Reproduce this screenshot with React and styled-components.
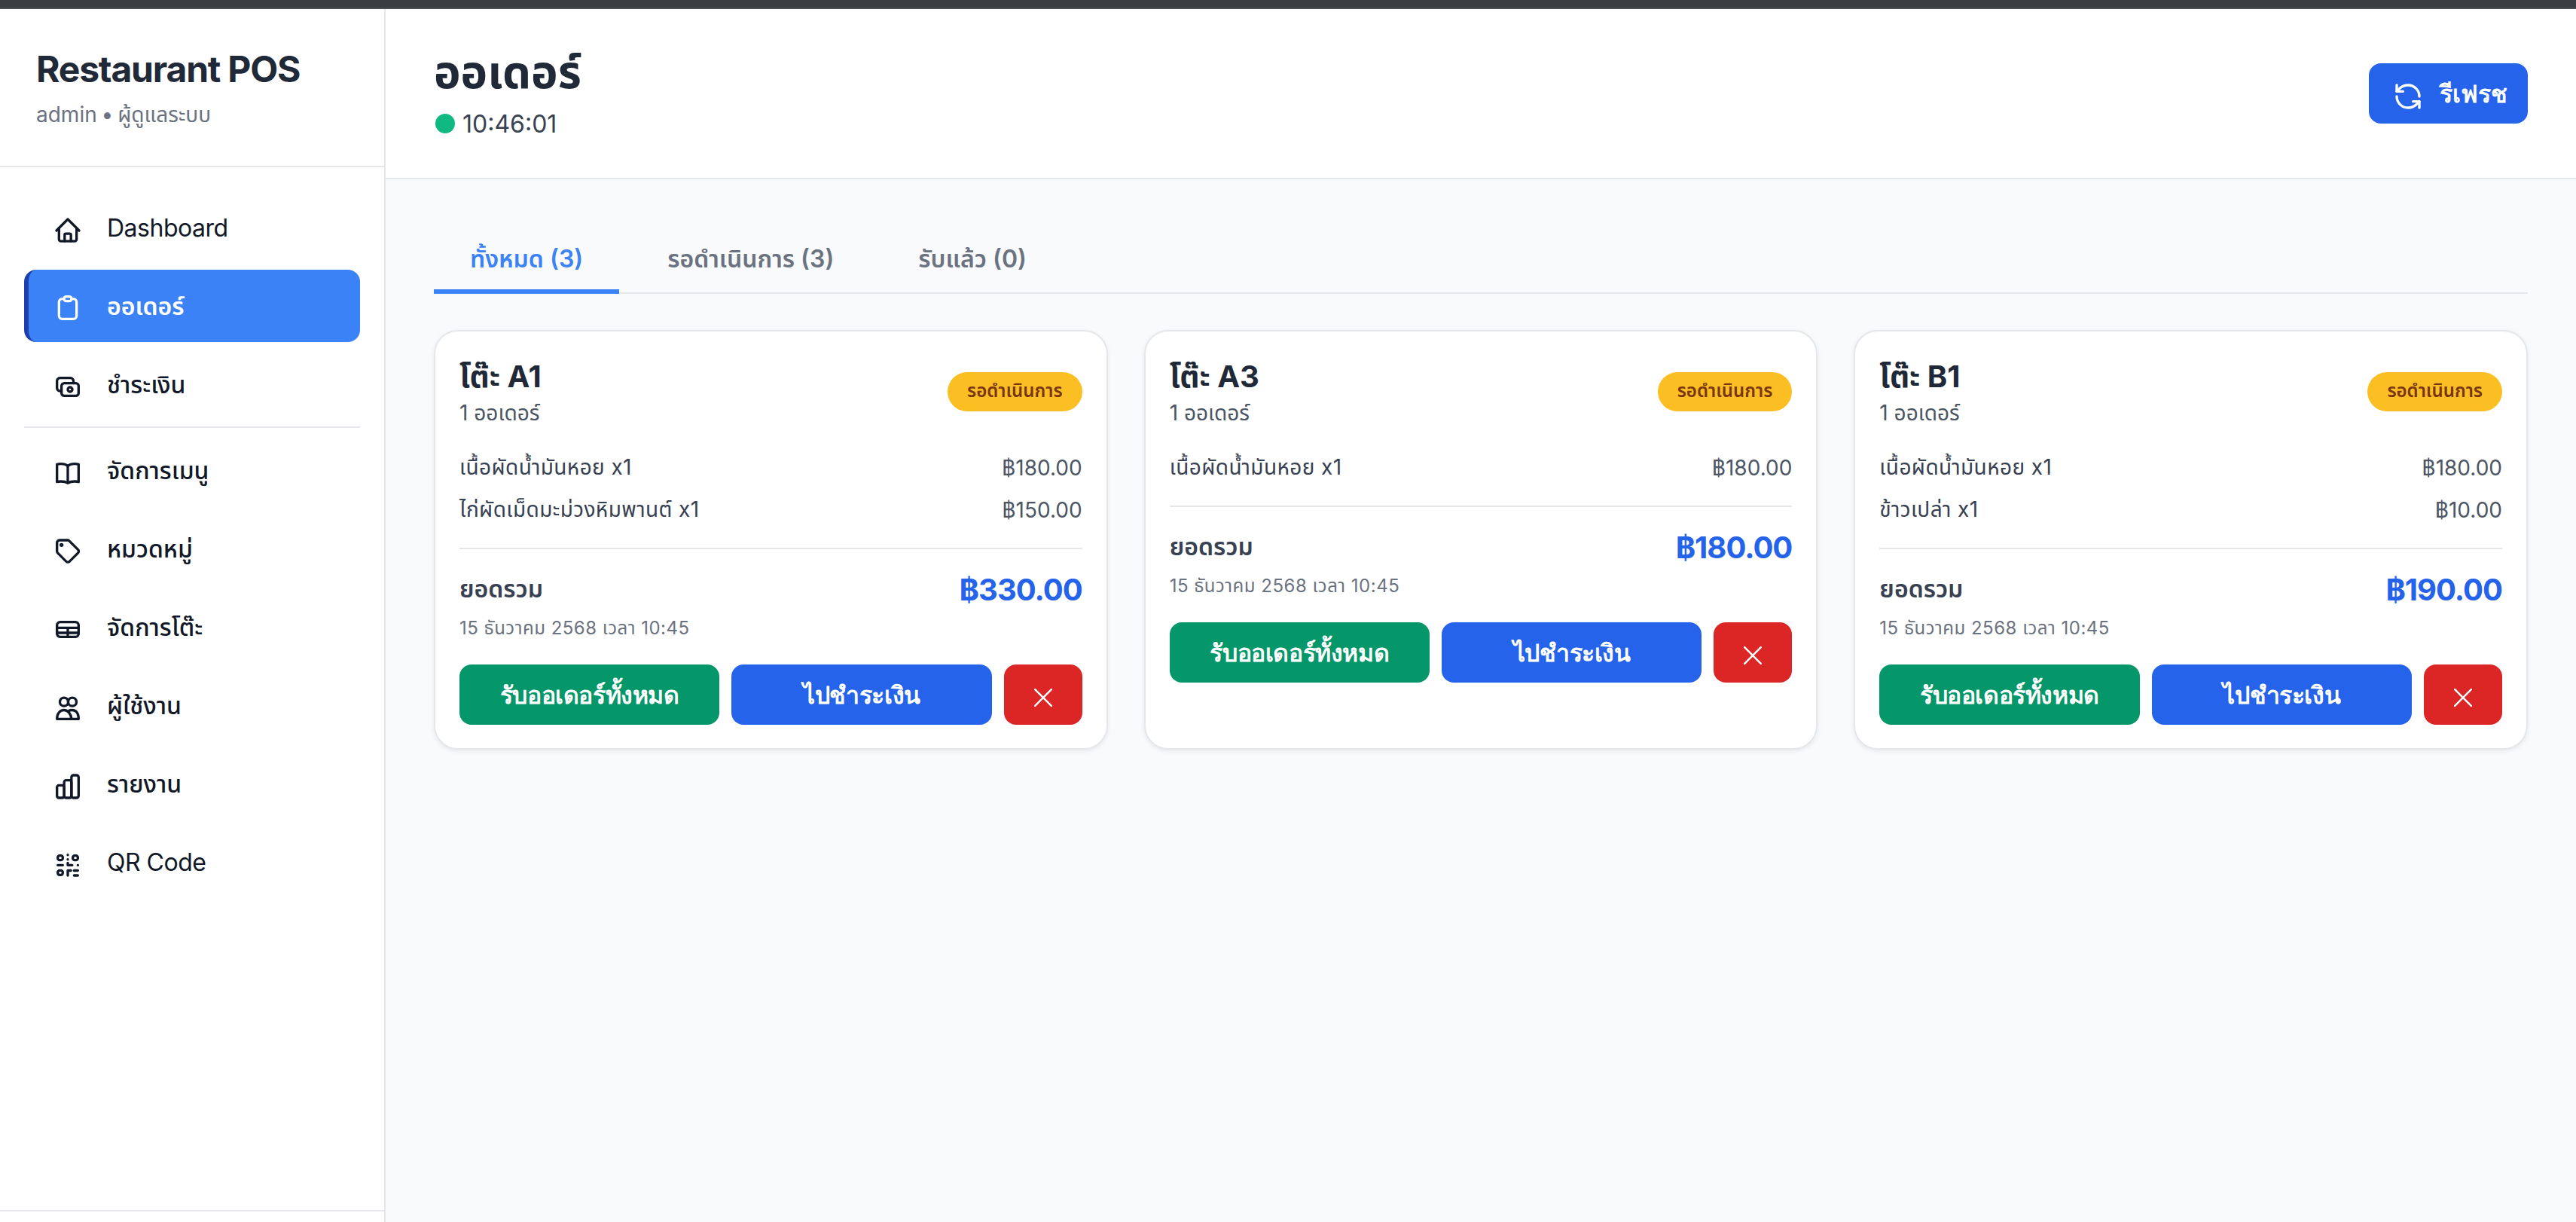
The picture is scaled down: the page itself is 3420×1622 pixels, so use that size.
import React from 'react';
import styled, { createGlobalStyle } from 'styled-components';
import { RefreshCcw } from 'lucide-react';

const GlobalStyle = createGlobalStyle`
  html, body { margin: 0; padding: 0; background: #f9fafb; }
  * { box-sizing: border-box; }
  body { font-family: Inter, "Noto Sans", "Noto Sans Thai", sans-serif; color: #111827; }
`;

const Svg = ({ children }) => (
  <svg viewBox="0 0 24 24" fill="none" stroke="currentColor" strokeWidth="2" strokeLinecap="round" strokeLinejoin="round">
    {children}
  </svg>
);

const HomeIcon = () => (
  <Svg>
    <path d="M3 12 12 3l9 9" />
    <path d="M5 10.5v8.5a1.5 1.5 0 0 0 1.5 1.5h11a1.5 1.5 0 0 0 1.5-1.5v-8.5" />
    <path d="M9.5 20.5v-5a1 1 0 0 1 1-1h3a1 1 0 0 1 1 1v5" />
  </Svg>
);
const ClipboardIcon = () => (
  <Svg>
    <path d="M9 4H7.5A2.5 2.5 0 0 0 5 6.5v11A2.5 2.5 0 0 0 7.5 20h9a2.5 2.5 0 0 0 2.5-2.5v-11A2.5 2.5 0 0 0 16.5 4H15" />
    <rect x="9" y="2.2" width="6" height="3.6" rx="1.8" />
  </Svg>
);
const CashIcon = () => (
  <Svg>
    <rect x="7" y="8.8" width="13.6" height="10" rx="2.2" />
    <path d="M16.5 8.8V7a2.4 2.4 0 0 0-2.4-2.4H5.8A2.4 2.4 0 0 0 3.4 7v5.6A2.4 2.4 0 0 0 5.8 15H7" />
    <circle cx="13.8" cy="13.8" r="1.8" />
  </Svg>
);
const BookIcon = () => (
  <Svg>
    <path d="M12 6.2C10.5 5 8.5 4.6 6.5 4.6c-1.1 0-2.1.1-3.1.4v14c1-.3 2-.4 3.1-.4 2 0 4 .4 5.5 1.2 1.5-.8 3.5-1.2 5.5-1.2 1.1 0 2.1.1 3.1.4V5c-1-.3-2-.4-3.1-.4-2 0-4 .4-5.5 1.6Z" />
    <path d="M12 6.2v13.6" />
  </Svg>
);
const TagIcon = () => (
  <Svg>
    <path d="M5.5 3h6.3a1.8 1.8 0 0 1 1.3.5l7.1 7.1a1.8 1.8 0 0 1 0 2.5L13.3 20a1.8 1.8 0 0 1-2.5 0l-6.9-6.9a1.8 1.8 0 0 1-.5-1.3V5.1A2.1 2.1 0 0 1 5.5 3Z" />
    <circle cx="7" cy="6.8" r=".6" fill="currentColor" />
  </Svg>
);
const TableIcon = () => (
  <Svg>
    <rect x="3.4" y="5.8" width="17.2" height="11.8" rx="2.5" />
    <path d="M3.4 10.4h17.2M3.4 14.4h17.2M12 10.4v7.2" />
  </Svg>
);
const UsersIcon = () => (
  <Svg>
    <circle cx="9" cy="7" r="3.3" />
    <circle cx="15.6" cy="7" r="3.3" />
    <path d="M3.4 20.6c0-4.6 2.6-7.1 5.6-7.1s5.6 3 6 7.1Z" />
    <path d="M12.5 14.2c1-.5 2-.7 3-.7 3 0 5.1 2.5 5.1 7.1H15" />
  </Svg>
);
const ChartIcon = () => (
  <Svg>
    <rect x="3.4" y="11" width="5.7" height="10" rx="1.6" />
    <rect x="9.1" y="7" width="5.8" height="14" rx="1.6" />
    <rect x="14.9" y="3" width="5.7" height="18" rx="1.6" />
  </Svg>
);
const QrIcon = () => (
  <Svg>
    <rect x="4" y="4.6" width="4" height="3.6" rx="1.5" />
    <rect x="16" y="4.6" width="4" height="3.6" rx="1.5" />
    <rect x="4" y="16.4" width="4" height="3.6" rx="1.5" />
    <path d="M4 12.2h4M12 4v.1M12 7.6v.1M12 10.5v1.7h3.5M20 12.2h.1M12 20.4v-3.9h2.5M17 16.5h3M17 20.4h3" />
  </Svg>
);
const CloseIcon = () => (
  <svg viewBox="0 0 24 24" fill="none" stroke="currentColor" strokeWidth="1.5" strokeLinecap="round">
    <path d="M5.5 5.5l13 13M18.5 5.5l-13 13" />
  </svg>
);

const navTop = [
  { label: 'Dashboard', Icon: HomeIcon, latin: true },
  { label: 'ออเดอร์', Icon: ClipboardIcon, active: true },
  { label: 'ชำระเงิน', Icon: CashIcon },
];
const navBottom = [
  { label: 'จัดการเมนู', Icon: BookIcon },
  { label: 'หมวดหมู่', Icon: TagIcon },
  { label: 'จัดการโต๊ะ', Icon: TableIcon },
  { label: 'ผู้ใช้งาน', Icon: UsersIcon },
  { label: 'รายงาน', Icon: ChartIcon },
  { label: 'QR Code', Icon: QrIcon, latin: true },
];
const orders = [
  { table: 'โต๊ะ A1', items: [['เนื้อผัดน้ำมันหอย x1', '฿180.00'], ['ไก่ผัดเม็ดมะม่วงหิมพานต์ x1', '฿150.00']], total: '฿330.00' },
  { table: 'โต๊ะ A3', items: [['เนื้อผัดน้ำมันหอย x1', '฿180.00']], total: '฿180.00' },
  { table: 'โต๊ะ B1', items: [['เนื้อผัดน้ำมันหอย x1', '฿180.00'], ['ข้าวเปล่า x1', '฿10.00']], total: '฿190.00' },
];

const Page = styled.div`height: 1622px; display: flex; flex-direction: column; overflow: hidden;`;
const TopBar = styled.div`height: 12px; flex: none; background: #383e42; border-bottom: 2px solid #4a4d4f;`;
const Body = styled.div`flex: 1; display: flex; min-height: 0;`;
const Sidebar = styled.aside`width: 512px; flex: none; background: #fff; border-right: 2px solid #e5e7eb; display: flex; flex-direction: column;`;
const Brand = styled.div`height: 210px; flex: none; padding: 48px 48px 0; border-bottom: 2px solid #e5e7eb;`;
const BrandName = styled.div`font-size: 48px; line-height: 64px; font-weight: 700; letter-spacing: -1.2px; color: #1f2937;`;
const BrandSub = styled.div`font-size: 28px; line-height: 40px; color: #6b7280; margin-top: 8px; word-spacing: -2px;`;
const Nav = styled.nav`flex: 1; padding: 32px; display: flex; flex-direction: column; gap: 8px;`;
const NavItem = styled.div`
  height: 96px; display: flex; align-items: center; gap: 32px; padding-left: 32px;
  padding-top: ${p => (p.$latin ? '0' : '4px')};
  border-left: 6px solid ${p => (p.$active ? '#1e40af' : 'transparent')};
  border-radius: 16px;
  background: ${p => (p.$active ? '#3b82f6' : 'transparent')};
  color: ${p => (p.$active ? '#fff' : '#111827')};
  font-size: 32px;
  font-weight: ${p => (p.$active ? 600 : p.$latin ? 400 : 500)};
  letter-spacing: ${p => (p.$latin ? '-0.5px' : '0')};
  svg { width: 40px; height: 40px; flex: none; margin-top: ${p => (p.$latin ? '8px' : '4px')}; }
`;
const NavDivider = styled.div`height: 2px; background: #e5e7eb;`;
const SideFoot = styled.div`height: 16px; flex: none; border-top: 2px solid #e5e7eb;`;
const Main = styled.main`flex: 1; min-width: 0; display: flex; flex-direction: column;`;
const Header = styled.header`height: 226px; flex: none; background: #fff; border-bottom: 2px solid #e5e7eb; padding: 0 64px; display: flex; align-items: center; justify-content: space-between;`;
const TitleBlock = styled.div`padding-bottom: 10px;`;
const Title = styled.h1`margin: 0; font-size: 60px; line-height: 80px; font-weight: 700; color: #1f2937;`;
const Clock = styled.div`display: flex; align-items: center; gap: 10px; font-size: 32px; color: #374151; margin-top: 10px;`;
const Dot = styled.span`width: 26px; height: 26px; margin-left: 2px; border-radius: 50%; background: #10b981;`;
const RefreshBtn = styled.button`
  height: 80px; width: 211px; padding: 0 0 0 32px; border: 0; border-radius: 16px; background: #2563eb; color: #fff;
  font: 600 32px Inter, "Noto Sans", sans-serif; display: flex; align-items: center; gap: 22px;
  svg { width: 40px; height: 40px; margin-top: 8px; }
`;
const Content = styled.div`flex: 1; padding: 48px 64px;`;
const Tabs = styled.div`display: flex; gap: 16px; border-bottom: 2px solid #e5e7eb; height: 104px;`;
const Tab = styled.div`
  padding: 20px 48px 0; height: 104px; display: flex; align-items: center; font-size: 32px; font-weight: 600;
  color: ${p => (p.$active ? '#3b82f6' : '#6b7280')};
  border-bottom: 6px solid ${p => (p.$active ? '#3b82f6' : 'transparent')};
`;
const Grid = styled.div`display: grid; grid-template-columns: repeat(3, 1fr); gap: 48px; margin-top: 48px;`;
const Card = styled.article`background: #fff; border: 2px solid #e5e7eb; border-radius: 32px; padding: 32px 32px 31px; box-shadow: 0 2px 6px rgba(0,0,0,.08);`;
const CardHead = styled.div`display: flex; justify-content: space-between; align-items: center; margin-bottom: 25px;`;
const TableName = styled.div`font-size: 40px; line-height: 56px; font-weight: 700; color: #1f2937;`;
const OrderCount = styled.div`font-size: 28px; line-height: 40px; color: #4b5563;`;
const Badge = styled.span`padding: 0 26px; height: 52px; display: flex; align-items: center; border-radius: 26px; background: #fbbf24; color: #78350f; font-size: 24px; font-weight: 600;`;
const Row = styled.div`display: flex; justify-content: space-between; align-items: center; height: 56px; font-size: 28px; color: #374151;`;
const ItemName = styled.span`letter-spacing: 0.4px;`;
const Price = styled.span`color: #4b5563;`;
const Totals = styled.div`margin-top: 22px; padding-top: 26px; border-top: 2px solid #e5e7eb; display: flex; justify-content: space-between; align-items: center;`;
const TotalLabel = styled.span`font-size: 32px; font-weight: 600; color: #374151;`;
const TotalValue = styled.span`font-size: 40px; line-height: 56px; font-weight: 700; color: #2563eb; letter-spacing: -1px;`;
const DateText = styled.div`font-size: 24px; line-height: 36px; color: #6b7280; margin-top: 5px; letter-spacing: 0.5px;`;
const Actions = styled.div`display: flex; gap: 16px; margin-top: 30px;`;
const ActionBtn = styled.button`
  flex: ${p => (p.$icon ? '0 0 104px' : 1)}; height: 80px; padding: 0; border: 0; border-radius: 16px; color: #fff;
  background: ${p => p.$bg}; font: 600 32px Inter, "Noto Sans", sans-serif; letter-spacing: -0.4px;
  display: flex; align-items: center; justify-content: center;
  svg { width: 40px; height: 40px; margin-top: 8px; }
`;

const App = () => (
  <Page>
    <GlobalStyle />
    <TopBar />
    <Body>
      <Sidebar>
        <Brand>
          <BrandName>Restaurant POS</BrandName>
          <BrandSub>admin • ผู้ดูแลระบบ</BrandSub>
        </Brand>
        <Nav>
          {navTop.map(({ label, Icon, active, latin }) => (
            <NavItem key={label} $active={active} $latin={latin}><Icon />{label}</NavItem>
          ))}
          <NavDivider />
          {navBottom.map(({ label, Icon, latin }) => (
            <NavItem key={label} $latin={latin}><Icon />{label}</NavItem>
          ))}
        </Nav>
        <SideFoot />
      </Sidebar>
      <Main>
        <Header>
          <TitleBlock>
            <Title>ออเดอร์</Title>
            <Clock><Dot />10:46:01</Clock>
          </TitleBlock>
          <RefreshBtn><RefreshCcw strokeWidth={2} />รีเฟรช</RefreshBtn>
        </Header>
        <Content>
          <Tabs>
            <Tab $active>ทั้งหมด (3)</Tab>
            <Tab>รอดำเนินการ (3)</Tab>
            <Tab>รับแล้ว (0)</Tab>
          </Tabs>
          <Grid>
            {orders.map(o => (
              <Card key={o.table}>
                <CardHead>
                  <div>
                    <TableName>{o.table}</TableName>
                    <OrderCount>1 ออเดอร์</OrderCount>
                  </div>
                  <Badge>รอดำเนินการ</Badge>
                </CardHead>
                {o.items.map(([name, price]) => (
                  <Row key={name}><ItemName>{name}</ItemName><Price>{price}</Price></Row>
                ))}
                <Totals>
                  <TotalLabel>ยอดรวม</TotalLabel>
                  <TotalValue>{o.total}</TotalValue>
                </Totals>
                <DateText>15 ธันวาคม 2568 เวลา 10:45</DateText>
                <Actions>
                  <ActionBtn $bg="#059669">รับออเดอร์ทั้งหมด</ActionBtn>
                  <ActionBtn $bg="#2563eb">ไปชำระเงิน</ActionBtn>
                  <ActionBtn $bg="#dc2626" $icon><CloseIcon /></ActionBtn>
                </Actions>
              </Card>
            ))}
          </Grid>
        </Content>
      </Main>
    </Body>
  </Page>
);

export default App;
